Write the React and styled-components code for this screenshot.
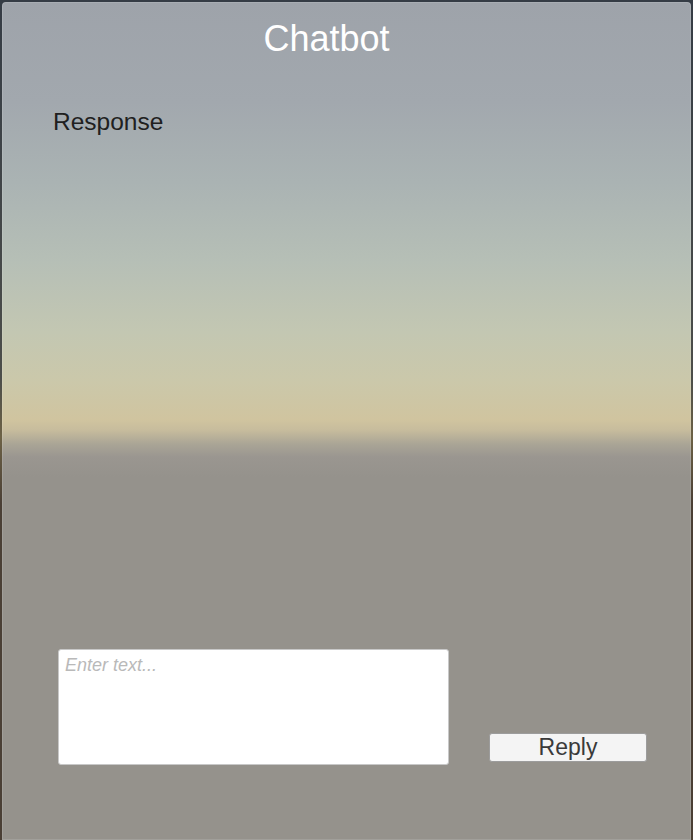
import React from "react";
import styled, { createGlobalStyle } from "styled-components";

const Global = createGlobalStyle`
  html, body { margin: 0; padding: 0; height: 100%; }
  body {
    font-family: "Liberation Sans", Arial, sans-serif;
    background: linear-gradient(180deg, #353c45 0%, #4c4e4a 45%, #6d6246 52%, #4a3f35 60%, #4a3f35 100%);
    overflow: hidden;
  }
  #root { height: 100%; }
`;

const Screen = styled.div`
  height: 840px;
  padding: 2px 2px 0 2px;
  box-sizing: border-box;
  display: flex;
`;

const Panel = styled.main`
  flex: 1;
  display: flex;
  flex-direction: column;
  border-radius: 4px 4px 0 0;
  box-shadow: inset 0 0 0 1px rgba(255, 255, 255, 0.12);
  background: linear-gradient(
    180deg,
    #9ea3aa 0px,
    #a2a8ae 100px,
    #aab3b3 180px,
    #b6bfb6 260px,
    #c3c7b2 330px,
    #cbc8aa 380px,
    #d0c49f 418px,
    #c7bc9d 428px,
    #aaa596 442px,
    #9a9690 455px,
    #95928c 475px,
    #95928c 100%
  );
`;

const Title = styled.h1`
  margin: 0;
  padding: 17px 40px 0 0;
  height: 47px;
  text-align: center;
  font-family: "Liberation Sans", Arial, sans-serif;
  font-weight: 400;
  font-size: 36px;
  line-height: 40px;
  color: #ffffff;
`;

const ResponseText = styled.p`
  margin: 42px 0 0 51px;
  font-size: 24.5px;
  line-height: 28px;
  color: #202020;
`;

const Spacer = styled.div`
  flex: 1;
`;

const BottomRow = styled.div`
  display: flex;
  align-items: flex-end;
  padding: 0 0 75px 56px;
`;

const InputBox = styled.textarea`
  width: 391px;
  height: 116px;
  box-sizing: border-box;
  resize: none;
  border: 1px solid #c8c8c8;
  border-radius: 3px;
  background: #ffffff;
  padding: 4px 6px;
  font-family: "Liberation Sans", Arial, sans-serif;
  font-size: 18px;
  line-height: 22px;
  color: #222;
  outline: none;
  &::placeholder {
    color: #b9b9b9;
    font-style: italic;
  }
`;

const ReplyButton = styled.button`
  margin: 0 0 3px 40px;
  width: 158px;
  height: 29px;
  box-sizing: border-box;
  border: 1px solid #9c9c9c;
  border-radius: 3px;
  background: #f4f4f4;
  font-family: "Liberation Sans", Arial, sans-serif;
  font-size: 23px;
  line-height: 27px;
  color: #3a3a3a;
  padding: 0;
  cursor: pointer;
`;

export default function App() {
  return (
    <>
      <Global />
      <Screen>
        <Panel>
          <Title>Chatbot</Title>
          <ResponseText>Response</ResponseText>
          <Spacer />
          <BottomRow>
            <InputBox placeholder="Enter text..." />
            <ReplyButton>Reply</ReplyButton>
          </BottomRow>
        </Panel>
      </Screen>
    </>
  );
}
